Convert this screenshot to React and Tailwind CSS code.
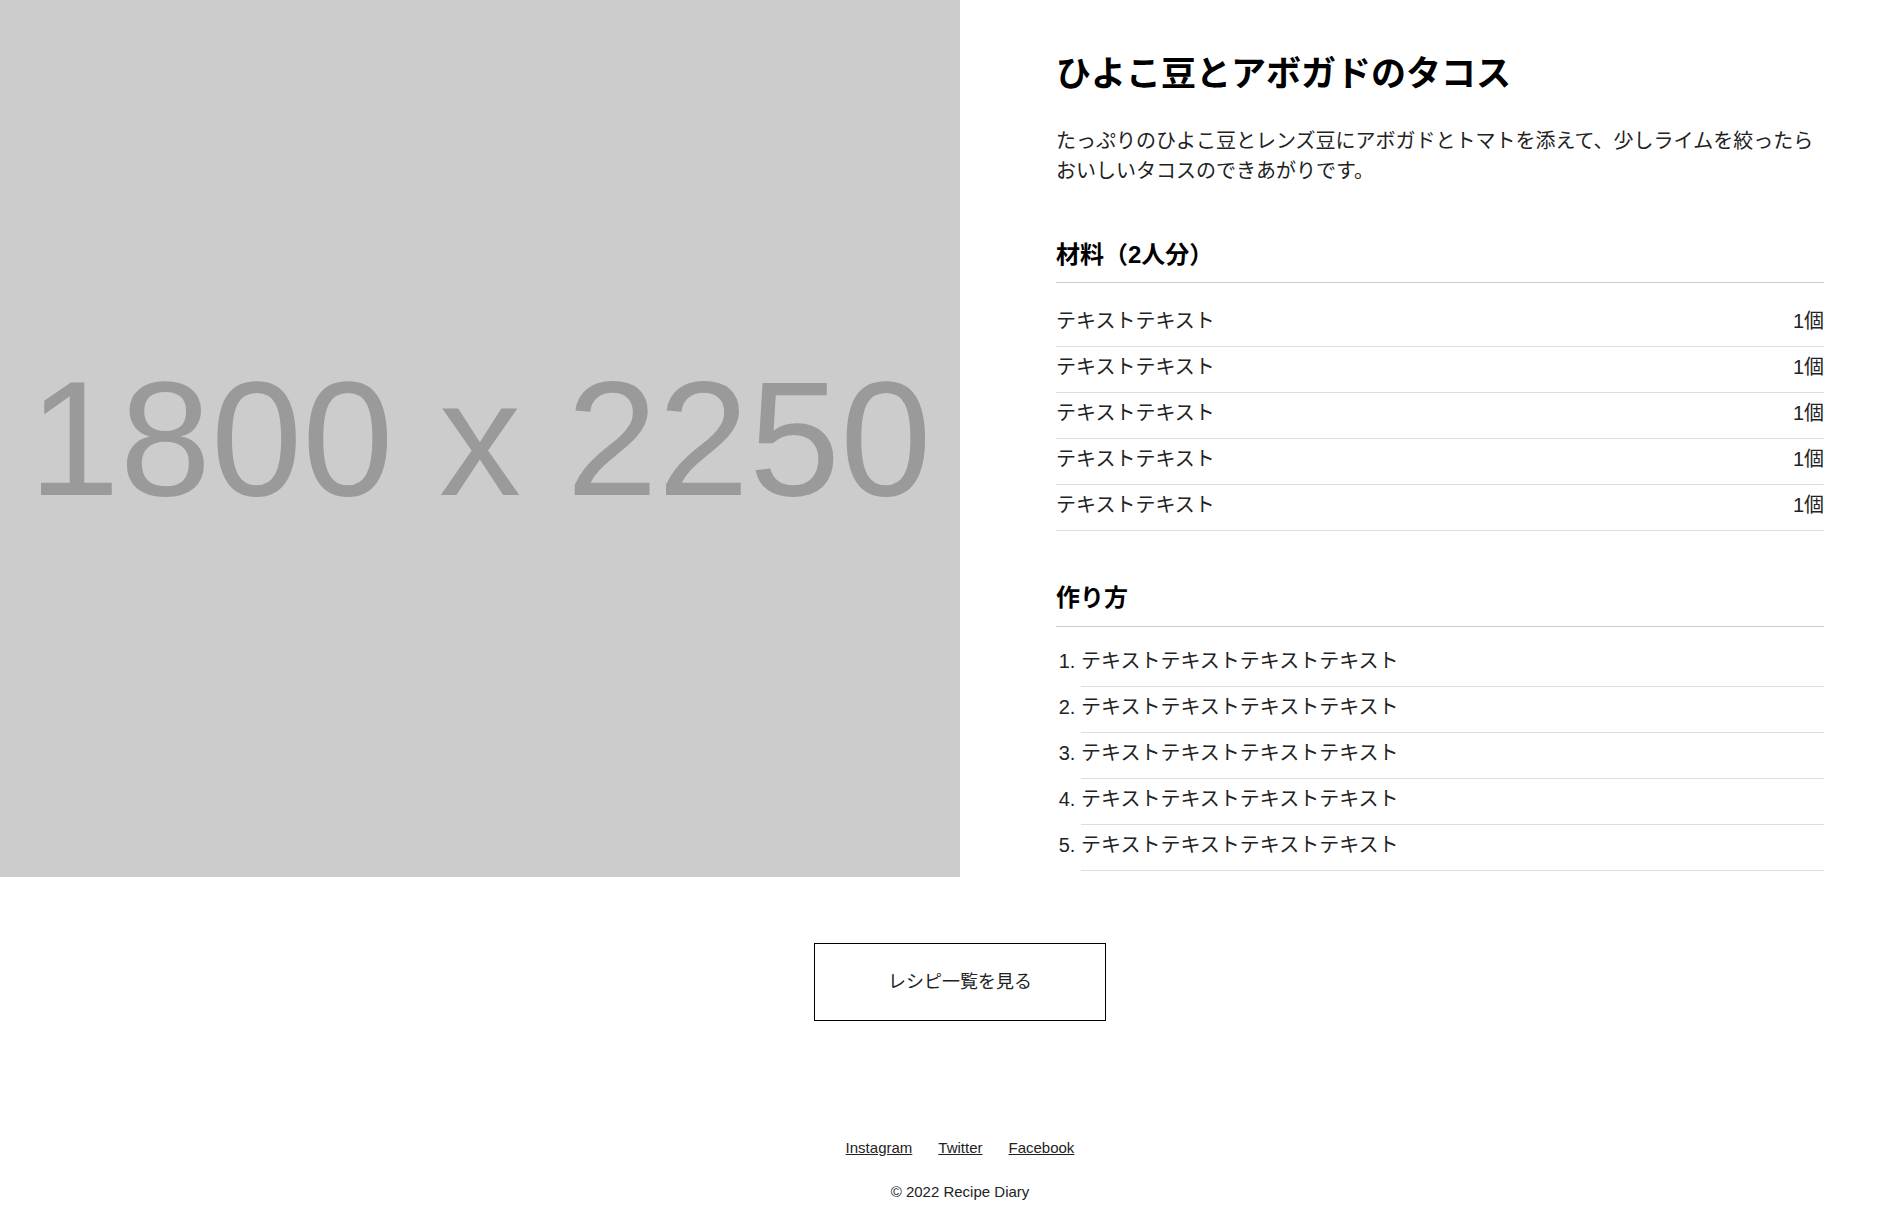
export default function App() {
  const ingredients = Array.from({ length: 5 });
  const steps = Array.from({ length: 5 });
  return (
    <div className="w-full overflow-hidden bg-white">
      <div className="w-[1920px] font-['Liberation_Sans','Noto_Sans_CJK_JP',sans-serif] text-[#222]">
        <section className="flex">
          <div className="w-[960px] shrink-0 bg-[#cccccc] flex items-center justify-center overflow-hidden">
            <span className="text-[164px] leading-none text-[#9a9a9a] whitespace-nowrap">1800 x 2250</span>
          </div>
          <div className="w-[960px] shrink-0 pl-24 pr-24 pt-[48px] pb-[6px]">
            <h1 className="text-[35px] font-bold leading-[52px] text-black">ひよこ豆とアボガドのタコス</h1>
            <p className="mt-[26px] text-[20px] leading-[30px]">
              たっぷりのひよこ豆とレンズ豆にアボガドとトマトを添えて、少しライムを絞ったらおいしいタコスのできあがりです。
            </p>
            <h2 className="mt-[51px] text-[24px] font-bold leading-[36px] pb-[9px] border-b border-[#cccccc] text-black">
              材料（2人分）
            </h2>
            <ul className="mt-[18px]">
              {ingredients.map((_, i) => (
                <li
                  key={i}
                  className="flex justify-between pt-[5px] pb-[10px] text-[20px] leading-[30px] border-b border-[#dddddd]"
                >
                  <span>テキストテキスト</span>
                  <span>1個</span>
                </li>
              ))}
            </ul>
            <h2 className="mt-[49px] text-[24px] font-bold leading-[36px] pb-[10px] border-b border-[#cccccc] text-black">
              作り方
            </h2>
            <ol className="mt-[14px] list-decimal pl-[25px]">
              {steps.map((_, i) => (
                <li
                  key={i}
                  className="pt-[5px] pb-[10px] text-[20px] leading-[30px] border-b border-[#dddddd]"
                >
                  テキストテキストテキストテキスト
                </li>
              ))}
            </ol>
          </div>
        </section>

        <div className="flex justify-center mt-[66px]">
          <a
            href="#"
            className="w-[292px] h-[78px] border border-black flex items-center justify-center text-[18px] text-[#222]"
          >
            レシピ一覧を見る
          </a>
        </div>

        <footer className="mt-[118px] pb-[40px]">
          <div className="flex justify-center gap-[26px] text-[15px] leading-[17px]">
            <a href="#" className="underline text-[#222]">Instagram</a>
            <a href="#" className="underline text-[#222]">Twitter</a>
            <a href="#" className="underline text-[#222]">Facebook</a>
          </div>
          <p className="mt-[27px] text-center text-[15px] leading-[17px] text-[#222]">© 2022 Recipe Diary</p>
        </footer>
      </div>
    </div>
  );
}
